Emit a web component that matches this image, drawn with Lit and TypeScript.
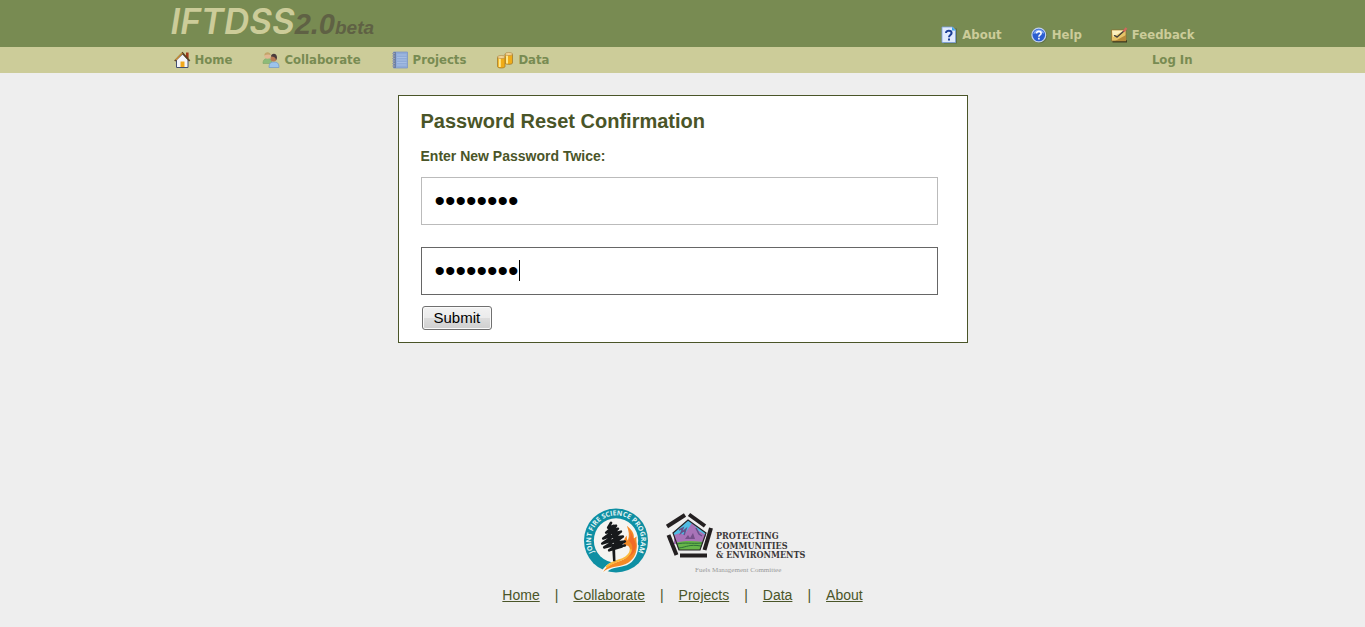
import { LitElement, html, css, svg } from "lit";
import { customElement, query } from "lit/decorators.js";

const homeIcon = html`<svg class="icon" viewBox="0 0 18 18" aria-hidden="true">
  <path d="M13 1.500h2.600v6H13z" fill="#a03a1c"/>
  <path d="M3.500 8.500 9.500 3l5.500 5.500V16.500h-11.500z" fill="#f4f5fa" stroke="#44506e"/>
  <path d="M1.800 10 9.500 2l7.200 8" fill="none" stroke="#5a4020" stroke-width="1.800"/>
  <path d="M2.600 9 9.300 2.200" stroke="#d59a40" stroke-width="1.200"/>
  <path d="M7.500 10.500h4V16h-4z" fill="#f0a81c"/>
</svg>`;

const peopleIcon = html`<svg class="icon" viewBox="0 0 18 18" aria-hidden="true">
  <path d="M1 12.500c0-4 2-5 4.500-5s4.500 1 4.500 5z" fill="#8dbb78" stroke="#7da468" stroke-width=".6"/>
  <circle cx="5.500" cy="4.700" r="3" fill="#e2b893"/>
  <path d="M2.300 4.500c0-4 6-4.500 6.500-.5-2-.9-4-.9-6.500.5z" fill="#c2a56a"/>
  <path d="M7 16.500c0-4.500 2-5.500 5-5.500s5 1 5 5.500z" fill="#9cc4ec" stroke="#6f98c8" stroke-width=".7"/>
  <circle cx="11.500" cy="7.500" r="3" fill="#b97a55"/>
  <path d="M9 5.500c0-4 6.500-4 6 1.500l-1 2.500c0-2.500-1.500-4-5-4z" fill="#4a3c3c"/>
</svg>`;

const notebookIcon = html`<svg class="icon" viewBox="0 0 18 18" aria-hidden="true">
  <path d="M2.500 1h14v16h-14z" fill="#8fabd9" stroke="#7d97c4" stroke-width=".8"/>
  <path d="M2.500 1h2.500v16h-2.500z" fill="#6d7fa5"/>
  <path d="M6 4h9.500M6 6.500h9.500M6 9h9.500M6 11.500h9.500M6 14h9.500" stroke="#a6bee4"/>
  <path d="M1 2.500h3M1 5h3M1 7.500h3M1 10h3M1 12.500h3M1 15h3" stroke="#9ba0a8"/>
</svg>`;

const dataIcon = html`<svg class="icon" viewBox="0 0 18 18" aria-hidden="true">
  <path d="M9 3v9c0 1.800 7.500 1.800 7.500 0V3z" fill="#f0ac18" stroke="#98722b" stroke-width=".7"/>
  <path d="M11 4v8.500" stroke="#ffe98c" stroke-width="2"/>
  <ellipse cx="12.750" cy="3" rx="3.750" ry="1.500" fill="#f3d696" stroke="#a98240" stroke-width=".6"/>
  <path d="M1.500 6v9.500c0 2 7.500 2 7.500 0V6z" fill="#f0ac18" stroke="#98722b" stroke-width=".7"/>
  <path d="M3.800 7v9" stroke="#ffe98c" stroke-width="2"/>
  <ellipse cx="5.250" cy="6" rx="3.750" ry="1.500" fill="#f3d696" stroke="#a98240" stroke-width=".6"/>
</svg>`;

const aboutIcon = html`<svg class="icon" viewBox="0 0 18 18" aria-hidden="true">
  <path d="M4 2.500h13v15H4z" fill="#475b3c" opacity=".55"/>
  <path d="M2 1h10.500L15.500 4v12.500H2z" fill="#dfeafd" stroke="#7ba0df" stroke-width=".8"/>
  <path d="M12 .8 15.700 4.500H12z" fill="#3aa4ea"/>
  <path d="M6 7c0-3.200 5.600-3 5.600 0 0 2-2.600 2-2.600 4.200M9 12.600v2" fill="none" stroke="#1c3f96" stroke-width="2"/>
</svg>`;

const helpIcon = html`<svg class="icon" viewBox="0 0 18 18" aria-hidden="true">
  <circle cx="9.700" cy="9.700" r="7.500" fill="#475b3c" opacity=".5"/>
  <circle cx="8.800" cy="9" r="6.900" fill="#2c5ed0" stroke="#c3d2ee" stroke-width="1.200"/>
  <path d="M3.300 8c1-6 10-6 11 0-3-2-7-2-11 0z" fill="#82a9f2"/>
  <path d="M6.600 7.400c0-2.700 4.500-2.600 4.500 0 0 1.500-2.200 1.600-2.200 3.300M8.900 11.800v1.700" fill="none" stroke="#fff" stroke-width="1.600"/>
</svg>`;

const feedbackIcon = html`<svg class="icon" viewBox="0 0 18 18" aria-hidden="true">
  <path d="M2.500 14h14.500v2.500H2.500z" fill="#3d3a20"/>
  <path d="M1.500 4h14.500v11H1.500z" fill="#e6c468" stroke="#8a6a2c" stroke-width=".7"/>
  <path d="M2 4.500h12L3 11z" fill="#fbf0bd"/>
  <path d="M16 9v6H5z" fill="#b58a3a"/>
  <path d="M4 9.800c1.500-1 2 1.500 3.200 1.200L14 5" fill="none" stroke="#3b3a38" stroke-width="1.300"/>
  <path d="M13.500 5.500 16.500 2" stroke="#d2675c" stroke-width="2.200"/>
</svg>`;

const mainLinks = [
  { label: "Home", icon: homeIcon },
  { label: "Collaborate", icon: peopleIcon },
  { label: "Projects", icon: notebookIcon },
  { label: "Data", icon: dataIcon },
];

const helpLinks = [
  { label: "About", icon: aboutIcon },
  { label: "Help", icon: helpIcon },
  { label: "Feedback", icon: feedbackIcon },
];

const footerLinks = ["Home", "Collaborate", "Projects", "Data", "About"];

const pentagonBars = [
  "M2 18.500 20 7",
  "M24 6.500 40 18",
  "M46 20 39.500 42",
  "M42 47.500H15",
  "M3.500 27 11.500 47",
].map((d) => svg`<path d=${d} />`);

@customElement("app-root")
export class AppRoot extends LitElement {
  @query("#confirm") private confirmInput!: HTMLInputElement;

  static styles = css`
    :host {
      display: flex;
      flex-direction: column;
      min-height: 100vh;
      background: #eee;
      color: #4a5528;
      font: 14px/16px "Liberation Sans", Arial, sans-serif;
    }
    * { box-sizing: border-box; }
    .wrap {
      max-width: 1024px;
      margin: 0 auto;
      display: flex;
      justify-content: space-between;
    }
    .top { background: #788b52; }
    .top .wrap { height: 47px; }
    .bar { background: #cccc99; }
    .bar .wrap { height: 26px; align-items: center; padding: 0 2px; }
    .brand {
      display: flex;
      align-items: baseline;
      color: #cccc99;
      text-decoration: none;
      font: italic 600 35px/43px Inter, sans-serif;
    }
    .version {
      color: #5f6144;
      font: italic 700 29px/43px "Liberation Sans", Arial, sans-serif;
    }
    .beta {
      color: #5f6144;
      font: italic 700 19px/43px "Liberation Sans", Arial, sans-serif;
    }
    .links {
      display: flex;
      gap: 30px;
      font: bold 13px/18px "DejaVu Sans Condensed", Verdana, sans-serif;
    }
    .top .links { color: #cccc99; align-self: flex-end; padding-bottom: 3px; gap: 28px; }
    .bar .links { color: #788b52; }
    .item {
      display: flex;
      align-items: center;
      gap: 4px;
      color: inherit;
      text-decoration: none;
    }
    .icon { width: 18px; height: 18px; display: block; }
    .main {
      flex: 1;
      padding: 22px 16px;
    }
    .card {
      max-width: 570px;
      margin: 0 auto;
      padding: 14px 29px 12px 22px;
      background: #fff;
      border: 1px solid #4a5528;
    }
    h1 { margin: 0 0 16px; font-size: 20px; line-height: 22px; }
    .label { display: block; margin-bottom: 13px; font-weight: bold; }
    .entry { position: relative; margin-bottom: 22px; }
    .entry.last { margin-bottom: 11px; }
    .field {
      display: block;
      width: 100%;
      height: 48px;
      padding: 0 13px;
      border: 1px solid #bbb;
      border-radius: 0;
      outline: none;
      background: #fff;
      color: #000;
      caret-color: transparent;
      font: 30px/34px "Liberation Sans", Arial, sans-serif;
    }
    .field:focus { border-color: #666; }
    .caret {
      display: none;
      position: absolute;
      left: 98px;
      top: 13px;
      width: 1px;
      height: 21px;
      background: #000;
    }
    .field:focus + .caret { display: block; }
    .submit {
      display: block;
      height: 24px;
      margin-left: 1px;
      padding: 0 11px;
      border: 1px solid #707070;
      border-radius: 3px;
      background: linear-gradient(#f2f2f2, #ebebeb 50%, #dddddd 50%, #cfcfcf);
      box-shadow: inset 0 0 0 1px #fafafa;
      color: #000;
      font: 15px/20px "Liberation Sans", Arial, sans-serif;
    }
    .footer {
      display: flex;
      flex-direction: column;
      align-items: center;
      gap: 14px;
      padding-bottom: 24px;
    }
    .logos { display: flex; gap: 16px; padding-left: 24px; }
    .logos svg { display: block; }
    .ring { font: bold 7px "Open Sans", sans-serif; fill: #e4f3f4; }
    .slab { font: bold 9px "DejaVu Serif Condensed", "DejaVu Serif", serif; fill: #3b3839; }
    .small { font: 7px "Liberation Serif", serif; fill: #999; }
    .foot-links { display: flex; gap: 15px; }
    .foot-links a { color: inherit; }
  `;

  firstUpdated() {
    this.confirmInput.focus();
  }

  private submit(e: Event) {
    e.preventDefault();
  }

  private item(link: { label: string; icon: unknown }) {
    return html`<a class="item" href="#">${link.icon}<span>${link.label}</span></a>`;
  }

  render() {
    return html`
      <header>
        <div class="top">
          <div class="wrap">
            <a class="brand" href="#">IFTDSS<span class="version">2.0</span><span class="beta">beta</span></a>
            <nav class="links" aria-label="Help">${helpLinks.map((l) => this.item(l))}</nav>
          </div>
        </div>
        <div class="bar">
          <div class="wrap">
            <nav class="links" aria-label="Main">${mainLinks.map((l) => this.item(l))}</nav>
            <div class="links"><a class="item" href="#">Log In</a></div>
          </div>
        </div>
      </header>

      <main class="main">
        <form class="card" @submit=${this.submit}>
          <h1>Password Reset Confirmation</h1>
          <label class="label" for="password">Enter New Password Twice:</label>
          <div class="entry">
            <input class="field" id="password" type="password" value="password" />
          </div>
          <div class="entry last">
            <input class="field" id="confirm" type="password" value="password" aria-label="Repeat new password" />
            <span class="caret"></span>
          </div>
          <button class="submit" type="submit">Submit</button>
        </form>
      </main>

      <footer class="footer">
        <div class="logos">
          <svg width="66" height="65" viewBox="0 0 66 66" role="img" aria-label="Joint Fire Science Program">
            <circle cx="33" cy="33" r="32.500" fill="#0e8fa3"/>
            <circle cx="33" cy="33" r="22.500" fill="#f5f4f1"/>
            <path d="M18 65C23 55 32 54 41 51c7-3 12-10 11-17l4 4c-1 12-7 19-15 21-8 2-14 2-18 7z" fill="#f5f4f1"/>
            <path d="M20 65c4-8 12-9 19-12 6-3 9-7 8-12-1-3-3-4-5-2-2-4-1-8 2-11 0 2 0 4 1 5 2-5 1-10-1-15 5 4 8 8 7 13l3-2c-1 5 1 8 0 12-1 9-6 14-14 17-7 2-14 2-20 7z" fill="#f58a26"/>
            <path d="M45 20c4 5 3 9 1 13 5 5 5 11-1 17 6-3 9-8 8-14-2-5-4-11-8-16z" fill="#f26b27"/>
            <path d="M23 60c6-6 14-6 20-10 3-2 5-5 5-8" fill="none" stroke="#fbb93c" stroke-width="2"/>
            <path d="M28 15 25 20l6-2-8 7 9-3-12 9 14-5-15 10 16-5-14 9 15-4-10 7 13-4M33 18l-4 4 6-1-5 5 8-2-7 6 9-1-8 6 10-1-9 5 9-1" fill="none" stroke="#17191b" stroke-width="2.600" stroke-linejoin="round" stroke-linecap="round"/>
            <path d="M29 38l1 16h2.500l-.5-16z" fill="#17191b"/>
            <path id="ring-path" d="M10.900 45.500A25.400 25.400 0 1 1 55.100 45.500" fill="none"/>
            <text class="ring"><textPath href="#ring-path" startOffset="50%" text-anchor="middle">JOINT FIRE SCIENCE PROGRAM</textPath></text>
          </svg>
          <svg width="142" height="65" viewBox="0 0 142 65" role="img" aria-label="Protecting Communities and Environments">
            <path d="M23 12 41 25 35 42H14L8 25z" fill="#4fbde4"/>
            <path d="M9 27l6-2 4 2 8-12 3 3 4 5 7 4-4 9-28 0z" fill="#a873b8"/>
            <path d="M14 22l4-2-2 5 5-4-2 6M31 20l3 6 3 2" fill="none" stroke="#65518a" stroke-width="1.500"/>
            <path d="M20 31l3-4 2 3 3-5 2 6z" fill="#75508a"/>
            <path d="M11 35c8-3 18-2 27-1l-3 8H14z" fill="#67b649"/>
            <path d="M12 36c8-2 14 0 25-1M14 40c8-1 10-4 22-2" fill="none" stroke="#2f6f3a"/>
            <path d="M23 12 41 25 35 42H14L8 25z" fill="none" stroke="#272527" stroke-width="1.200"/>
            <g fill="none" stroke="#231f20" stroke-width="4">${pentagonBars}</g>
            <text class="slab" x="51" y="31">PROTECTING</text>
            <text class="slab" x="51" y="41">COMMUNITIES</text>
            <text class="slab" x="51" y="50">&amp; ENVIRONMENTS</text>
            <text class="small" x="30" y="64">Fuels Management Committee</text>
          </svg>
        </div>
        <nav class="foot-links" aria-label="Footer">
          ${footerLinks.map((l, i) => html`${i ? html`<span aria-hidden="true">|</span>` : ""}<a href="#">${l}</a>`)}
        </nav>
      </footer>
    `;
  }
}
